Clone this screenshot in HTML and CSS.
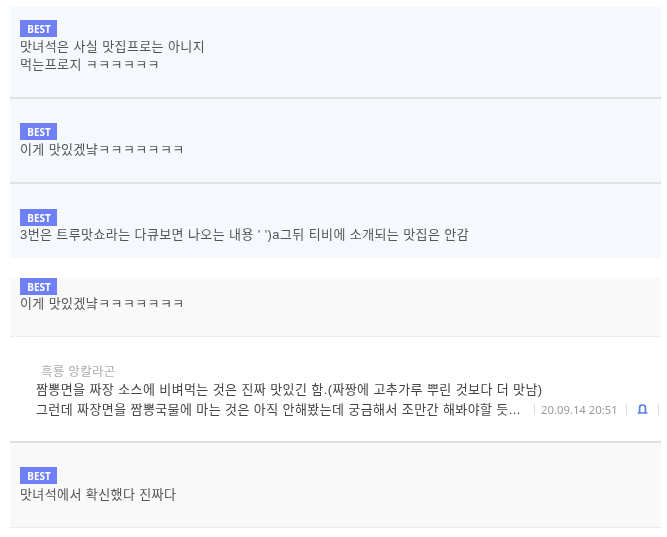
FILE: index.html
```html
<!DOCTYPE html>
<html lang="ko">
  <head>
    <meta charset="UTF-8" />
    <meta name="viewport" content="width=device-width, initial-scale=1, minimum-scale=1">
    <title>댓글</title>
    <link rel="stylesheet" href="styles.css">
  </head>
  <body>
    <ul class="cmt_list best_list">
      <li class="cmt_item first">
        <span class="badge">BEST</span>
        <p class="cmt_txt">맛녀석은 사실 맛집프로는 아니지<br>먹는프로지 ㅋㅋㅋㅋㅋㅋ</p>
      </li>
      <li class="cmt_item second">
        <span class="badge">BEST</span>
        <p class="cmt_txt">이게 맛있겠냨ㅋㅋㅋㅋㅋㅋㅋ</p>
      </li>
      <li class="cmt_item third">
        <span class="badge">BEST</span>
        <p class="cmt_txt">3번은 트루맛쇼라는 다큐보면 나오는 내용 ' ')a그뒤 티비에 소개되는 맛집은 안감</p>
      </li>
    </ul>
    <div class="cmt_item gray clipped">
      <span class="badge">BEST</span>
      <p class="cmt_txt">이게 맛있겠냨ㅋㅋㅋㅋㅋㅋㅋ</p>
    </div>
    <div class="reply">
      <p class="nick">흑룡 앙칼라곤</p>
      <p class="reply_txt">짬뽕면을 짜장 소스에 비벼먹는 것은 진짜 맛있긴 함.(짜짱에 고추가루 뿌린 것보다 더 맛남)</p>
      <div class="reply_row">
        <p class="reply_txt ellipsis">그런데 짜장면을 짬뽕국물에 마는 것은 아직 안해봤는데 궁금해서 조만간 해봐야할 듯...</p>
        <span class="meta date">20.09.14 20:51</span>
        <span class="meta bell">
          <svg width="11" height="11" viewBox="0 0 11 11"><path d="M2.6 8.5V3.4C2.6 1.9 3.8 1 5.5 1s2.9.9 2.9 2.4v5.1M.6 9h9.8" fill="none" stroke="#5b7fe0" stroke-width="1.7"/></svg>
        </span>
        <span class="meta last"></span>
      </div>
    </div>
    <div class="cmt_item gray final">
      <span class="badge">BEST</span>
      <p class="cmt_txt">맛녀석에서 확신했다 진짜다</p>
    </div>
  </body>
</html>
```

FILE: styles.css
```css
* {padding:0; margin:0; box-sizing: border-box;}
html, body {height: 100%; background: #fff;}
body {padding: 7px 6px 0 10px; font-family: "Liberation Sans", "Noto Sans CJK KR", sans-serif; color: #555; overflow: hidden; filter: blur(.4px);}
ul {list-style: none;}

.cmt_item {padding-left: 10px; background: #f5f8fd;}
.cmt_item.first {height: 92px; padding-top: 13px; border-bottom: 2px solid #dfe2e5;}
.cmt_item.second {height: 85px; padding-top: 24px; border-bottom: 2px solid #dfe2e5;}
.cmt_item.third {height: 74px; padding-top: 25px;}
.cmt_item.gray {background: #f9f9f9; border-bottom: 1px dotted #e0e0e0;}
.cmt_item.clipped {height: 59px; margin-top: 20px;}
.cmt_item.final {height: 85px; padding-top: 24px;}
.first .cmt_txt, .second .cmt_txt {margin-top: 1px;}
.final .cmt_txt {margin-top: 2px;}

.badge {display: flex; align-items: center; justify-content: center; width: 37px; height: 17px; padding-left: 1px; background: #6f80f7; color: #fff; font-family: "Noto Sans", sans-serif; font-size: 10px; font-weight: bold;}
.cmt_txt {font-size: 13px; line-height: 18px; letter-spacing: .4px;}

.reply {height: 106px; padding: 28px 0 0 26px; border-bottom: 2px solid #dfdfdf;}
.nick {padding-left: 5px; font-size: 12.5px; line-height: 14px; letter-spacing: .3px; color: #aaa;}
.reply_txt {margin-top: 1px; font-size: 13px; line-height: 19px; letter-spacing: .4px; color: #444;}
.reply_row {display: flex; align-items: center;}
.ellipsis {width: 498px; white-space: nowrap; overflow: hidden;}
.meta {display: flex; align-items: center; padding: 0 8px 0 6px; height: 11px; border-left: 1px solid #ddd; color: #999; white-space: nowrap;}
.date {font-family: "Noto Sans", sans-serif; font-size: 11.3px;}
.bell {padding: 0 10px;}
.last {padding: 0;}
```
